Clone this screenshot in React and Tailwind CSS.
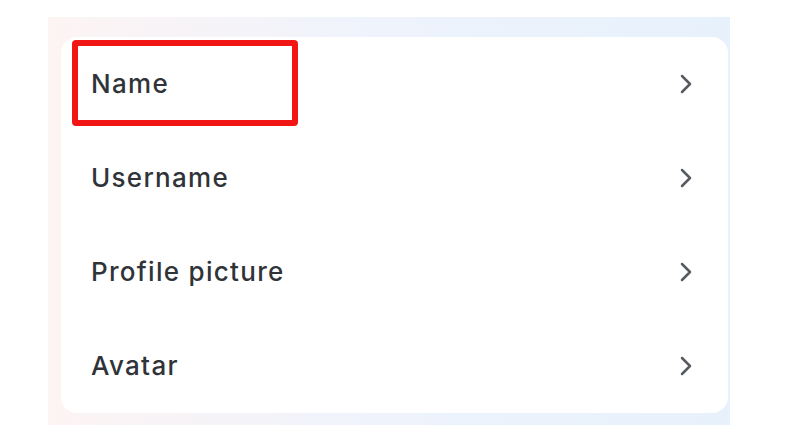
const ITEMS = ["Name", "Username", "Profile picture", "Avatar"];

function Chevron() {
  return (
    <svg width="14" height="22" viewBox="0 0 14 22" fill="none" className="text-[#565b61]">
      <polyline points="3,3 11,11 3,19" stroke="currentColor" strokeWidth="2.5" strokeLinecap="round" strokeLinejoin="round" />
    </svg>
  );
}

export default function App() {
  return (
    <div className="w-[800px] h-[441px] bg-white" style={{ fontFamily: "Inter, 'Noto Sans', sans-serif" }}>
      <div className="ml-[48px] pt-[17px]">
        <div className="w-[682px] h-[408px] bg-gradient-to-r from-[#fdf4f4] via-[#eef3fc] to-[#e7f1fc] pl-[13px] pt-[20px] pr-[2px] pb-[12px]">
          <div className="relative h-full bg-white rounded-2xl">
            {ITEMS.map((label) => (
              <div key={label} className="h-[94px] flex items-center justify-between pl-[30px] pr-[35px]">
                <span className="text-[26px] font-medium text-[#303439] tracking-[1.3px] -mt-[2px]">{label}</span>
                <Chevron />
              </div>
            ))}
            {/* highlight box */}
            <div className="absolute left-[11px] top-[3px] w-[226px] h-[86px] border-[6px] border-[#f21515] rounded-[4px]" />
          </div>
        </div>
      </div>
    </div>
  );
}
